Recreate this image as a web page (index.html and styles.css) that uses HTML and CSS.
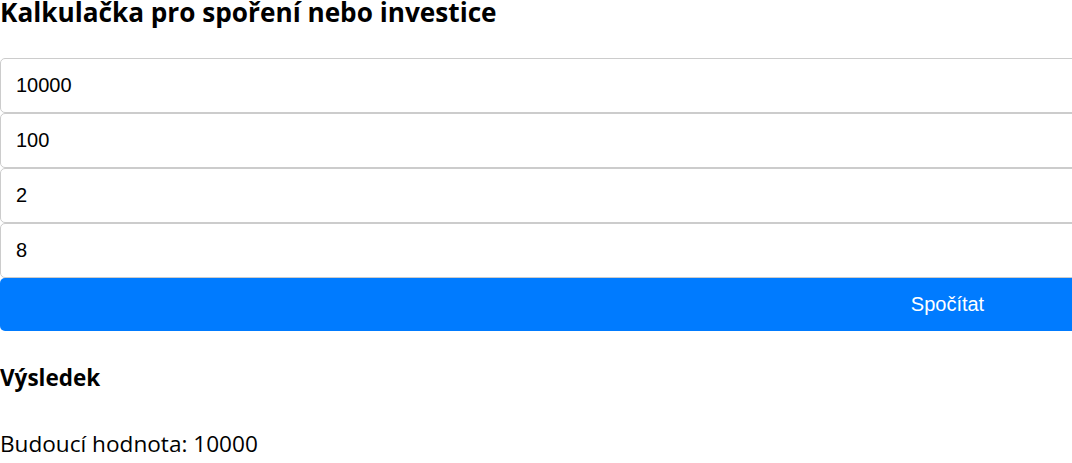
FILE: index.html
```html
<!DOCTYPE html>
<html lang="cs">
<head>
<meta charset="utf-8">
<title>Kalkulačka pro spoření nebo investice</title>
<link rel="stylesheet" href="styles.css">
</head>
<body>
<main class="page">
  <h2 class="title">Kalkulačka pro spoření nebo investice</h2>
  <form class="calc">
    <input class="field" type="number" value="10000">
    <input class="field" type="number" value="100">
    <input class="field" type="number" value="2">
    <input class="field" type="number" value="8">
    <button class="btn" type="button">Spočítat</button>
  </form>
  <section class="result">
    <h3 class="result-title">Výsledek</h3>
    <p class="result-text">Budoucí hodnota: 10000</p>
  </section>
</main>
</body>
</html>
```
FILE: styles.css
```css
html, body {
  margin: 0;
  padding: 0;
  overflow: hidden;
  background: #fff;
}
body {
  font-family: "Open Sans", "Noto Sans", sans-serif;
  color: #000;
}
.page {
  display: flex;
  flex-direction: column;
}
.title {
  margin: 0 0 34px;
  font-size: 26.2px;
  line-height: 24px;
  font-weight: 700;
}
.calc {
  display: flex;
  flex-direction: column;
  width: 1895px;
}
.field {
  box-sizing: border-box;
  height: 55px;
  margin: 0;
  padding: 0 15px;
  border: 1px solid #ccc;
  border-radius: 5px;
  font-family: "Liberation Sans", Arial, sans-serif;
  font-size: 20px;
  color: #000;
  background: #fff;
  outline: none;
  -moz-appearance: textfield;
}
.field::-webkit-outer-spin-button,
.field::-webkit-inner-spin-button {
  -webkit-appearance: none;
  margin: 0;
}
.btn {
  height: 53px;
  margin: 0;
  border: none;
  border-radius: 5px;
  background: #007bff;
  color: #fff;
  font-family: "Liberation Sans", Arial, sans-serif;
  font-size: 20px;
  cursor: pointer;
}
.result {
  margin-top: 33px;
}
.result-title {
  margin: 0 0 37px;
  font-size: 22.5px;
  line-height: 28px;
  font-weight: 700;
}
.result-text {
  margin: 0;
  font-size: 22.6px;
  line-height: 30px;
}
```
